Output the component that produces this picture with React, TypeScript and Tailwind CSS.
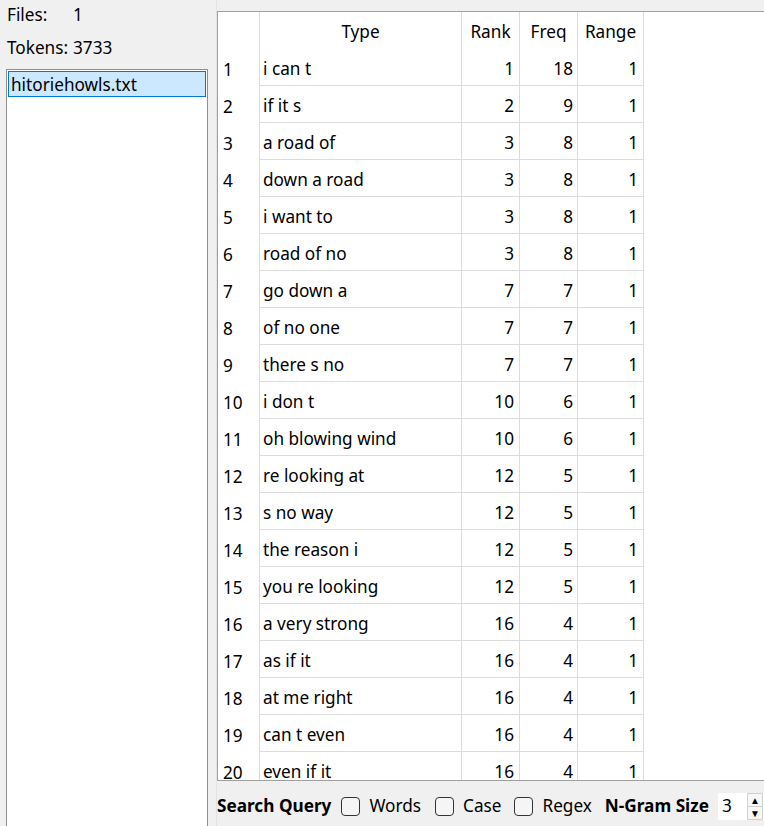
import React from "react";

const rows: [string, number, number, number][] = [
  ["i can t", 1, 18, 1],
  ["if it s", 2, 9, 1],
  ["a road of", 3, 8, 1],
  ["down a road", 3, 8, 1],
  ["i want to", 3, 8, 1],
  ["road of no", 3, 8, 1],
  ["go down a", 7, 7, 1],
  ["of no one", 7, 7, 1],
  ["there s no", 7, 7, 1],
  ["i don t", 10, 6, 1],
  ["oh blowing wind", 10, 6, 1],
  ["re looking at", 12, 5, 1],
  ["s no way", 12, 5, 1],
  ["the reason i", 12, 5, 1],
  ["you re looking", 12, 5, 1],
  ["a very strong", 16, 4, 1],
  ["as if it", 16, 4, 1],
  ["at me right", 16, 4, 1],
  ["can t even", 16, 4, 1],
  ["even if it", 16, 4, 1],
];

function Checkbox() {
  return <div className="w-[19px] h-[19px] rounded-[4px] border border-[#333333] bg-[#f5f5f5] shrink-0" />;
}

export default function App() {
  return (
    <div className="w-[764px] h-[826px] bg-[#f0f0f0] flex overflow-hidden text-black font-['Noto_Sans',sans-serif] text-[17.2px]">
      {/* Left panel */}
      <div className="w-[216px] shrink-0 flex flex-col">
        <div className="pt-[3px] pl-[7px] flex flex-col gap-[9px]">
          <div className="flex h-[24px] items-center">
            <span className="w-[66px]">Files:</span>
            <span>1</span>
          </div>
          <div className="flex h-[24px] items-center">
            <span className="w-[66px]">Tokens:</span>
            <span>3733</span>
          </div>
        </div>
        <div className="mt-[9px] ml-[6px] w-[202px] flex-1 bg-white border border-[#8f8f8f] border-b-0 p-[1px]">
          <div className="h-[26px] bg-[#cce8ff] border border-[#0078d7] pl-[2px] pt-[1px] flex items-center">
            hitoriehowls.txt
          </div>
        </div>
      </div>

      {/* Right panel */}
      <div className="flex-1 flex flex-col border-l border-[#e3e3e3] pt-[11px] min-w-0">
        <div className="h-[770px] shrink-0 border-t border-l border-b border-[#a0a0a0] bg-white overflow-hidden flex flex-col">
          <div className="flex h-[37px] shrink-0">
            <div className="w-[42px] border-r border-[#dcdcdc]" />
            <div className="w-[202px] border-r border-[#dcdcdc] flex items-center justify-center pt-[3px]">Type</div>
            <div className="w-[58px] border-r border-[#dcdcdc] flex items-center justify-center pt-[3px]">Rank</div>
            <div className="w-[58px] border-r border-[#dcdcdc] flex items-center justify-center pt-[3px]">Freq</div>
            <div className="w-[66px] border-r border-[#dcdcdc] flex items-center justify-center pt-[3px]">Range</div>
          </div>
          {rows.map((r, i) => (
            <div key={i} className="flex h-[37px] shrink-0">
              <div className="w-[42px] border-r border-[#dcdcdc] flex items-center pl-[5px] pt-[4px]">{i + 1}</div>
              <div className="w-[202px] border-r border-b border-[#dcdcdc] flex items-center pl-[3px] pt-[4px] whitespace-nowrap">{r[0]}</div>
              <div className="w-[58px] border-r border-b border-[#dcdcdc] flex items-center justify-end pr-[5px] pt-[4px]">{r[1]}</div>
              <div className="w-[58px] border-r border-b border-[#dcdcdc] flex items-center justify-end pr-[4px] pt-[4px]">{r[2]}</div>
              <div className="w-[66px] border-r border-b border-[#dcdcdc] flex items-center justify-end pr-[5px] pt-[4px]">{r[3]}</div>
            </div>
          ))}
        </div>

        {/* Bottom bar */}
        <div className="flex-1 flex items-center pl-[0px] pt-[5px] whitespace-nowrap">
          <span className="font-bold">Search Query</span>
          <div className="ml-[10px]"><Checkbox /></div>
          <span className="ml-[9px]">Words</span>
          <div className="ml-[14px]"><Checkbox /></div>
          <span className="ml-[9px]">Case</span>
          <div className="ml-[13px]"><Checkbox /></div>
          <span className="ml-[9px]">Regex</span>
          <span className="ml-[13px] font-bold">N-Gram Size</span>
          <div className="ml-[9px] h-[27px] flex-1 bg-white flex items-center relative">
            <span className="pl-[4px]">3</span>
            <div className="absolute right-[1px] top-0 bottom-0 w-[16px] flex flex-col">
              <div className="flex-1 flex items-center justify-center border border-[#d0d0d0] bg-[#f7f7f7] text-[10px] leading-none">▲</div>
              <div className="flex-1 flex items-center justify-center border border-t-0 border-[#d0d0d0] bg-[#f7f7f7] text-[10px] leading-none">▼</div>
            </div>
          </div>
        </div>
      </div>
    </div>
  );
}
